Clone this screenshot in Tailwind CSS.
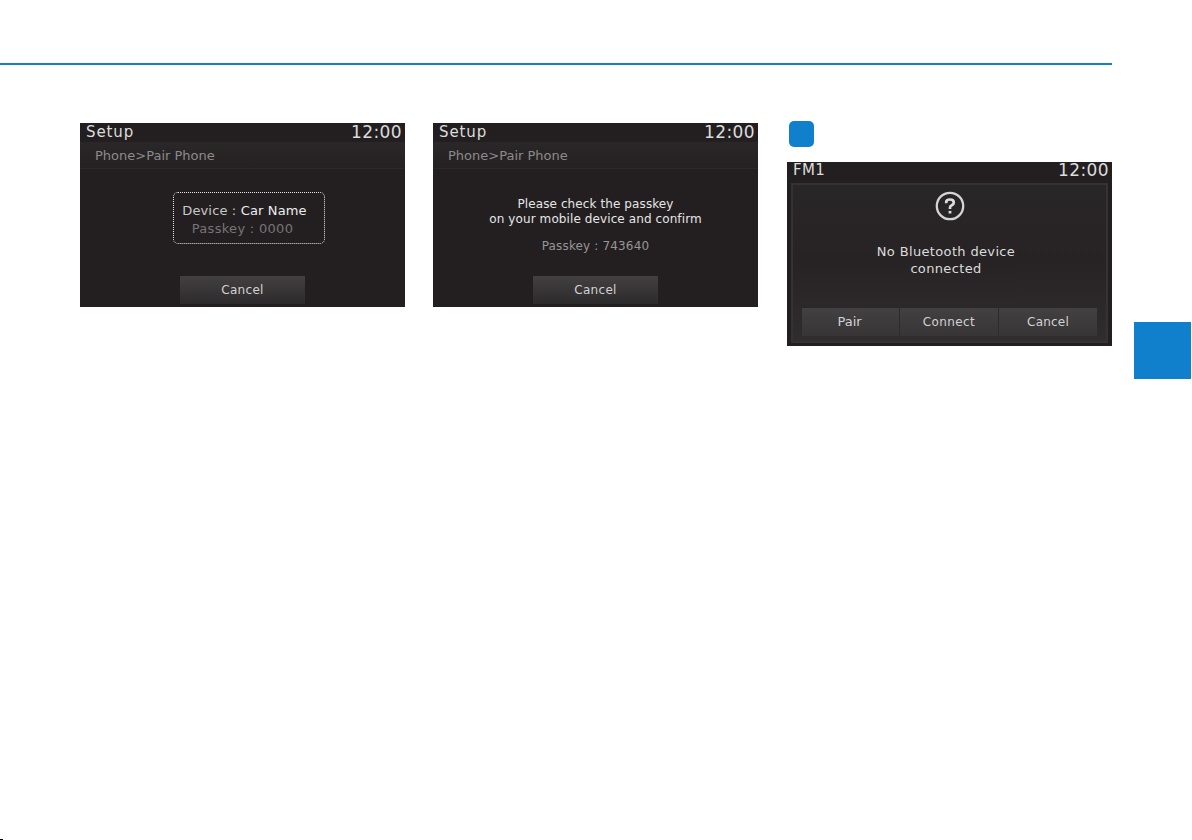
<!DOCTYPE html>
<html lang="en">
<head>
    <meta charset="UTF-8">
    <meta name="viewport" content="width=device-width, initial-scale=1.0">
    <title>Pair Phone</title>
    <script src="https://cdn.jsdelivr.net/npm/@tailwindcss/browser@4"></script>
</head>
<body class="bg-white w-[1192px] h-[840px] overflow-hidden font-['DejaVu_Sans',sans-serif]">
    <div class="h-[840px] flex flex-col">
        <div class="mt-[63px] w-[1112px] h-[2px] shrink-0 bg-[#1080cd]"></div>
        <div class="flex items-start pl-[80px] pt-[56px] grow">
            <!-- passkey screen -->
            <div class="mt-[2px] w-[325px] h-[184px] bg-[#231f20] flex flex-col whitespace-nowrap">
                <div class="h-[19px] flex justify-between pl-[6px] pr-[3px] text-[#dcdcdc]">
                    <span class="text-[15px] leading-[18px] tracking-[0.9px]">Setup</span>
                    <span class="text-[17px] leading-[18px] tracking-[0.4px]">12:00</span>
                </div>
                <div class="h-[27px] pl-[15px] bg-linear-to-b from-[#2a2728] to-[#252122] border-b border-[#2d292a] text-[13px] leading-[28px] text-[#8c8a8b]">Phone&gt;Pair Phone</div>
                <div class="mt-[23px] ml-[93px] w-[152px] h-[52px] pt-[9px] pr-[9px] border border-dotted border-[#e8e8e8] rounded-[5px] text-center text-[13px] leading-[18px]">
                    <div class="text-[#c9c8c8] tracking-[0.15px]">Device : <span class="text-[#eeeeee]">Car Name</span></div>
                    <div class="pr-[4px] text-[#777475] tracking-[0.3px]">Passkey : 0000</div>
                </div>
                <div class="mt-[32px] ml-[100px] w-[125px] h-[28px] bg-linear-to-b from-[#424041] to-[#2d2a2b] text-center text-[12px] leading-[28px] tracking-[0.3px] text-[#d2d2d2]">Cancel</div>
            </div>
            <!-- passkey confirmation -->
            <div class="mt-[2px] ml-[28px] w-[325px] h-[184px] bg-[#231f20] flex flex-col whitespace-nowrap">
                <div class="h-[19px] flex justify-between pl-[6px] pr-[3px] text-[#dcdcdc]">
                    <span class="text-[15px] leading-[18px] tracking-[0.9px]">Setup</span>
                    <span class="text-[17px] leading-[18px] tracking-[0.4px]">12:00</span>
                </div>
                <div class="h-[27px] pl-[15px] bg-linear-to-b from-[#2a2728] to-[#252122] border-b border-[#2d292a] text-[13px] leading-[28px] text-[#8c8a8b]">Phone&gt;Pair Phone</div>
                <div class="mt-[28px] h-[30px] text-center text-[12px] leading-[15px] tracking-[0.1px] text-[#e6e6e6]">Please check the passkey<br>on your mobile device and confirm</div>
                <div class="mt-[11px] h-[16px] text-center text-[12px] leading-[16px] tracking-[0.15px] text-[#979595]">Passkey : 743640</div>
                <div class="mt-[22px] ml-[100px] w-[125px] h-[28px] bg-linear-to-b from-[#424041] to-[#2d2a2b] text-center text-[12px] leading-[28px] tracking-[0.3px] text-[#d2d2d2]">Cancel</div>
            </div>
            <!-- no device dialog -->
            <div class="ml-[29px] w-[325px]">
                <div class="ml-[2px] w-[25px] h-[26px] rounded-[5px] bg-[#1080cd]"></div>
                <div class="mt-[15px] w-[325px] h-[184px] bg-[#231f20] flex flex-col whitespace-nowrap">
                    <div class="h-[21px] flex justify-between pl-[6px] pr-[3px] text-[#dcdcdc]">
                        <span class="text-[15px] leading-[17px] tracking-[0.4px]">FM1</span>
                        <span class="text-[17px] leading-[16px] tracking-[0.4px]">12:00</span>
                    </div>
                    <div class="mx-[4px] h-[160px] flex flex-col items-center border-2 border-[#353233] bg-linear-to-b from-[#292627] via-[#272324] to-[#302d2e]">
                        <svg class="mt-[6px] shrink-0" width="30" height="30" viewBox="0 0 30 30" fill="none">
                            <circle cx="15" cy="15" r="13.2" stroke="#d4d4d4" stroke-width="2.3"/>
                            <path d="M11.2 12.2V11.3Q11.2 8.5 15 8.5Q18.8 8.5 18.8 11.6Q18.8 13.4 16.8 14.3Q15 15.1 15 16.4V18" stroke="#dcdcdc" stroke-width="2.7"/>
                            <path d="M13.6 19.9H16.4V22.5H13.6Z" fill="#dcdcdc"/>
                        </svg>
                        <div class="mt-[22px] pr-[7px] text-center text-[13px] leading-[17px] tracking-[0.35px] text-[#dcdcdc]">No Bluetooth device<br>connected</div>
                        <div class="mt-[31px] flex gap-px w-[295px] h-[28px] text-center text-[12px] leading-[28px] text-[#d2d2d2]">
                            <div class="w-[97px] pr-[2px] bg-linear-to-b from-[#424041] to-[#383536] text-[13px]">Pair</div>
                            <div class="w-[98px] bg-linear-to-b from-[#424041] to-[#383536] tracking-[0.4px]">Connect</div>
                            <div class="w-[98px] bg-linear-to-b from-[#424041] to-[#383536] tracking-[0.2px]">Cancel</div>
                        </div>
                    </div>
                </div>
            </div>
            <div class="mt-[201px] ml-[22px] w-[57px] h-[57px] bg-[#1080cd]"></div>
        </div>
        <div class="w-[3px] h-px bg-black"></div>
    </div>
</body>
</html>
